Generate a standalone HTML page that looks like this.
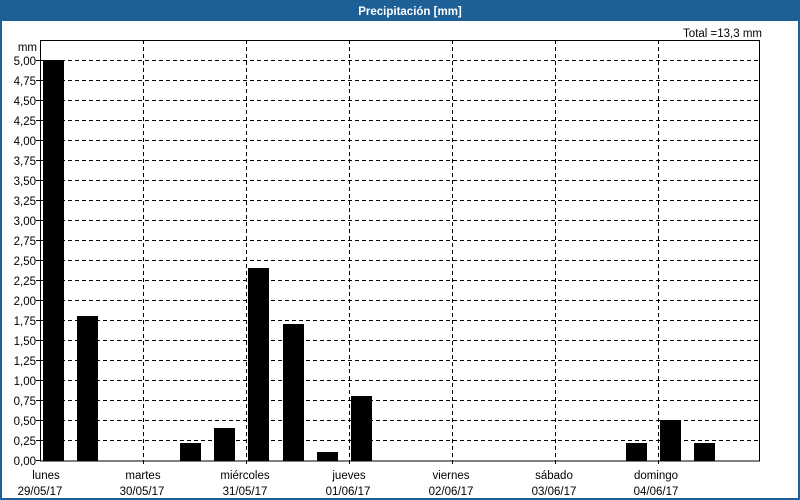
<!DOCTYPE html>
<html><head><meta charset="utf-8"><style>
html,body{margin:0;padding:0;background:#fff;}
svg{display:block;}
text{font-family:"Liberation Sans","DejaVu Sans",sans-serif;font-size:11.5px;fill:#000;}
</style></head><body>
<svg width="800" height="500" xmlns="http://www.w3.org/2000/svg">
<rect x="0" y="0" width="800" height="500" fill="#fff"/>
<rect x="0" y="0" width="800" height="21" fill="#1d6098"/>
<rect x="0" y="0" width="2" height="500" fill="#1d6098"/>
<rect x="798" y="0" width="2" height="500" fill="#1d6098"/>
<rect x="0" y="498" width="800" height="2" fill="#1d6098"/>
<text x="410" y="15" text-anchor="middle" style="fill:#fff;font-weight:bold;font-size:11.5px">Precipitación [mm]</text>
<text x="762" y="37" text-anchor="end">Total =13,3 mm</text>
<text x="37" y="51" text-anchor="end">mm</text>
<g stroke="#000" stroke-width="1" stroke-dasharray="4,3" shape-rendering="crispEdges">
<line x1="40" y1="60.5" x2="760" y2="60.5"/><line x1="40" y1="80.5" x2="760" y2="80.5"/><line x1="40" y1="100.5" x2="760" y2="100.5"/><line x1="40" y1="120.5" x2="760" y2="120.5"/><line x1="40" y1="140.5" x2="760" y2="140.5"/><line x1="40" y1="160.5" x2="760" y2="160.5"/><line x1="40" y1="180.5" x2="760" y2="180.5"/><line x1="40" y1="200.5" x2="760" y2="200.5"/><line x1="40" y1="220.5" x2="760" y2="220.5"/><line x1="40" y1="240.5" x2="760" y2="240.5"/><line x1="40" y1="260.5" x2="760" y2="260.5"/><line x1="40" y1="280.5" x2="760" y2="280.5"/><line x1="40" y1="300.5" x2="760" y2="300.5"/><line x1="40" y1="320.5" x2="760" y2="320.5"/><line x1="40" y1="340.5" x2="760" y2="340.5"/><line x1="40" y1="360.5" x2="760" y2="360.5"/><line x1="40" y1="380.5" x2="760" y2="380.5"/><line x1="40" y1="400.5" x2="760" y2="400.5"/><line x1="40" y1="420.5" x2="760" y2="420.5"/><line x1="40" y1="440.5" x2="760" y2="440.5"/>
<line x1="143.5" y1="40" x2="143.5" y2="465"/><line x1="246.5" y1="40" x2="246.5" y2="465"/><line x1="349.5" y1="40" x2="349.5" y2="465"/><line x1="452.5" y1="40" x2="452.5" y2="465"/><line x1="555.5" y1="40" x2="555.5" y2="465"/><line x1="658.5" y1="40" x2="658.5" y2="465"/>
</g>
<rect x="40.5" y="40.5" width="719" height="420.5" fill="none" stroke="#000" stroke-width="1" shape-rendering="crispEdges"/>
<g fill="#000">
<rect x="43" y="60" width="21" height="401"/>
<rect x="77" y="316" width="21" height="145"/>
<rect x="180" y="443" width="21" height="18"/>
<rect x="214" y="428" width="21" height="33"/>
<rect x="248" y="268" width="21" height="193"/>
<rect x="283" y="324" width="21" height="137"/>
<rect x="317" y="452" width="21" height="9"/>
<rect x="351" y="396" width="21" height="65"/>
<rect x="626" y="443" width="21" height="18"/>
<rect x="660" y="420" width="21" height="41"/>
<rect x="694" y="443" width="21" height="18"/>
</g>
<g stroke="#000" shape-rendering="crispEdges">
<line x1="36" y1="60.5" x2="40" y2="60.5"/><line x1="36" y1="80.5" x2="40" y2="80.5"/><line x1="36" y1="100.5" x2="40" y2="100.5"/><line x1="36" y1="120.5" x2="40" y2="120.5"/><line x1="36" y1="140.5" x2="40" y2="140.5"/><line x1="36" y1="160.5" x2="40" y2="160.5"/><line x1="36" y1="180.5" x2="40" y2="180.5"/><line x1="36" y1="200.5" x2="40" y2="200.5"/><line x1="36" y1="220.5" x2="40" y2="220.5"/><line x1="36" y1="240.5" x2="40" y2="240.5"/><line x1="36" y1="260.5" x2="40" y2="260.5"/><line x1="36" y1="280.5" x2="40" y2="280.5"/><line x1="36" y1="300.5" x2="40" y2="300.5"/><line x1="36" y1="320.5" x2="40" y2="320.5"/><line x1="36" y1="340.5" x2="40" y2="340.5"/><line x1="36" y1="360.5" x2="40" y2="360.5"/><line x1="36" y1="380.5" x2="40" y2="380.5"/><line x1="36" y1="400.5" x2="40" y2="400.5"/><line x1="36" y1="420.5" x2="40" y2="420.5"/><line x1="36" y1="440.5" x2="40" y2="440.5"/><line x1="36" y1="460.5" x2="40" y2="460.5"/>
</g>
<g text-anchor="end">
<text x="36" y="65">5,00</text><text x="36" y="85">4,75</text><text x="36" y="105">4,50</text><text x="36" y="125">4,25</text><text x="36" y="145">4,00</text><text x="36" y="165">3,75</text><text x="36" y="185">3,50</text><text x="36" y="205">3,25</text><text x="36" y="225">3,00</text><text x="36" y="245">2,75</text><text x="36" y="265">2,50</text><text x="36" y="285">2,25</text><text x="36" y="305">2,00</text><text x="36" y="325">1,75</text><text x="36" y="345">1,50</text><text x="36" y="365">1,25</text><text x="36" y="385">1,00</text><text x="36" y="405">0,75</text><text x="36" y="425">0,50</text><text x="36" y="445">0,25</text><text x="36" y="465">0,00</text>
</g>
<g text-anchor="middle">
<text x="46" y="479">lunes</text><text x="40" y="495">29/05/17</text>
<text x="143" y="479">martes</text><text x="142" y="495">30/05/17</text>
<text x="245" y="479">miércoles</text><text x="245" y="495">31/05/17</text>
<text x="349" y="479">jueves</text><text x="348" y="495">01/06/17</text>
<text x="451" y="479">viernes</text><text x="451" y="495">02/06/17</text>
<text x="554" y="479">sábado</text><text x="554" y="495">03/06/17</text>
<text x="656" y="479">domingo</text><text x="656" y="495">04/06/17</text>
</g>
</svg>
</body></html>
